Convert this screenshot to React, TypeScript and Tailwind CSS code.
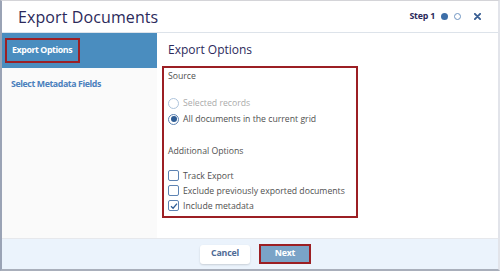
import React, { useState } from 'react';

const font = { fontFamily: '"Open Sans", "Liberation Sans", sans-serif' };

const App: React.FC = () => {
  const [source, setSource] = useState<'selected' | 'all'>('all');
  const [opts, setOpts] = useState({ track: false, exclude: false, metadata: true });

  const toggle = (k: keyof typeof opts) => setOpts(prev => ({ ...prev, [k]: !prev[k] }));

  return (
    <div className="w-[500px] h-[271px] bg-white" style={font}>
      <div className="flex flex-col h-full border-t border-[#d4d4d8] border-l-2 border-l-[#9aa3b5] border-r-2 border-r-[#e2e4ea] border-b-2 border-b-[#a9afbb]">
        {/* Header */}
        <div className="h-[32px] shrink-0 flex items-center justify-between pl-[16px] pr-[17px] border-b border-[#dde3ea]">
          <h1 className="text-[16px] text-[#2c2a5b] tracking-[0.1px]">Export Documents</h1>
          <div className="flex items-center">
            <span className="text-[8.8px] font-bold tracking-[-0.2px] text-[#2c2a5b]">Step 1</span>
            <span className="ml-[6px] w-[7px] h-[7px] rounded-full bg-[#3d6ea8]" />
            <span className="ml-[6px] w-[7px] h-[7px] rounded-full border border-[#6f95c2]" />
            <svg className="ml-[13px]" width="7" height="7" viewBox="0 0 8 8">
              <path d="M1 1 L7 7 M7 1 L1 7" stroke="#3a5f94" strokeWidth="2.2" strokeLinecap="round" />
            </svg>
          </div>
        </div>

        {/* Body */}
        <div className="flex flex-1 min-h-0">
          <div className="w-[155px] shrink-0 bg-[#fafafa] flex flex-col">
            <div className="h-[35px] bg-[#4a8dbf] flex items-center pl-[3px]">
              <div className="border-2 border-[#9c1f24] h-[25px] w-[75px] pl-[5px] flex items-center">
                <span className="text-[8.8px] font-bold tracking-[-0.4px] text-white">Export Options</span>
              </div>
            </div>
            <div className="pl-[9px] pt-[10px] text-[8.8px] font-bold tracking-[-0.4px] text-[#4a80bd]">Select Metadata Fields</div>
          </div>

          <div className="flex-1 bg-white pl-[5px] pt-[8px]">
            <h2 className="pl-[6px] text-[12px] text-[#2c2a5b] leading-[18px]">Export Options</h2>
            <div className="mt-[7px] w-[196px] h-[152px] border-2 border-[#9c1f24] pl-[4px] pt-[1px] text-[8.7px] leading-[14px] text-[#505050] whitespace-nowrap">
              <div>Source</div>
              <div className="mt-[12px] flex flex-col">
                <label className="h-[16px] flex items-center text-[#ababab]" onClick={() => setSource('selected')}>
                  <span className="w-[11px] h-[11px] rounded-full border border-[#aec4dc] bg-white" />
                  <span className="ml-[4px]">Selected records</span>
                </label>
                <label className="h-[16px] flex items-center" onClick={() => setSource('all')}>
                  <span className="w-[11px] h-[11px] rounded-full border border-[#5d83b3] bg-white flex items-center justify-center">
                    {source === 'all' && <span className="w-[6px] h-[6px] rounded-full bg-[#2f5d95]" />}
                  </span>
                  <span className="ml-[4px]">All documents in the current grid</span>
                </label>
              </div>
              <div className="mt-[17px]">Additional Options</div>
              <div className="mt-[10px] flex flex-col">
                {([
                  ['track', 'Track Export'],
                  ['exclude', 'Exclude previously exported documents'],
                  ['metadata', 'Include metadata'],
                ] as const).map(([k, label]) => (
                  <label key={k} className="h-[15px] flex items-center" onClick={() => toggle(k)}>
                    <span className="w-[11px] h-[11px] rounded-[2px] border border-[#5d83b3] bg-white flex items-center justify-center">
                      {opts[k] && (
                        <svg width="8" height="8" viewBox="0 0 8 8">
                          <path d="M1 4.2 L3.1 6.2 L7 1.6" fill="none" stroke="#2f5d95" strokeWidth="1.3" />
                        </svg>
                      )}
                    </span>
                    <span className="ml-[4px]">{label}</span>
                  </label>
                ))}
              </div>
            </div>
          </div>
        </div>

        {/* Footer */}
        <div className="h-[31px] shrink-0 bg-[#ebf3fc] border-t border-[#e6e8ec] flex items-center justify-center gap-[9px] pl-[11px]">
          <button className="w-[50px] h-[19px] rounded-[3px] bg-white shadow-[0_1px_2px_rgba(0,0,0,0.15)] text-[8.8px] font-bold tracking-[-0.2px] text-[#4f6b96]">
            Cancel
          </button>
          <button className="w-[52px] h-[20px] bg-[#7aa3c7] border-2 border-[#9c1f24] text-[8.8px] font-bold tracking-[-0.2px] text-white">
            Next
          </button>
        </div>
      </div>
    </div>
  );
};

export default App;
